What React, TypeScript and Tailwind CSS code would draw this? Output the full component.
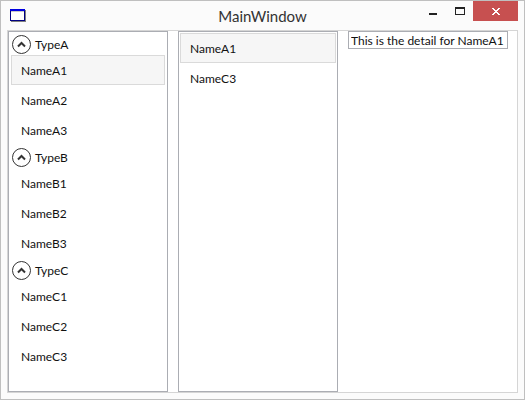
import React, { useState } from 'react';
import clsx from 'clsx';

const groups = [
  { type: 'TypeA', names: ['NameA1', 'NameA2', 'NameA3'] },
  { type: 'TypeB', names: ['NameB1', 'NameB2', 'NameB3'] },
  { type: 'TypeC', names: ['NameC1', 'NameC2', 'NameC3'] },
];

const recentNames = ['NameA1', 'NameC3'];

type ItemProps = {
  name: string;
  selected: boolean;
  onSelect: (name: string) => void;
};

const ListItem: React.FC<ItemProps> = ({ name, selected, onSelect }) => (
  <li>
    <button
      onClick={() => onSelect(name)}
      aria-pressed={selected}
      className={clsx(
        'flex h-[30px] w-full items-center border px-[9px] pt-[2px]',
        selected ? 'border-[#dadada] bg-[#f6f6f6]' : 'border-transparent',
      )}
    >
      {name}
    </button>
  </li>
);

type GroupProps = {
  type: string;
  names: string[];
  current: string;
  onSelect: (name: string) => void;
};

const Group: React.FC<GroupProps> = ({ type, names, current, onSelect }) => {
  const [open, setOpen] = useState(true);

  return (
    <section>
      <button
        onClick={() => setOpen(!open)}
        aria-expanded={open}
        className="flex h-[23px] w-full items-center gap-1 px-[3px] pt-[2px]"
      >
        <svg
          width="19"
          height="19"
          viewBox="0 0 19 19"
          fill="none"
          className={clsx(!open && 'rotate-180')}
        >
          <circle cx="9.5" cy="9.5" r="9" stroke="#333333" />
          <path d="M6 11.5 9.5 8 13 11.5" stroke="#333333" strokeWidth="2" />
        </svg>
        {type}
      </button>
      {open && (
        <ul className="px-[2px]">
          {names.map((name) => (
            <ListItem
              key={name}
              name={name}
              selected={name === current}
              onSelect={onSelect}
            />
          ))}
        </ul>
      )}
    </section>
  );
};

const TitleBar: React.FC = () => (
  <header className="grid h-[29px] shrink-0 grid-cols-[1fr_auto_1fr] bg-[#fbfbfb]">
    <svg
      width="16"
      height="14"
      viewBox="0 0 16 14"
      shapeRendering="crispEdges"
      className="mt-2 ml-[9px]"
    >
      <path d="M1 1h15v12H1z" fill="#808080" />
      <path d="M0 0h15v12H0z" fill="#000080" />
      <path d="M0 0h15v2H0z" fill="#0000e0" />
      <path d="M1 2h13v9H1z" fill="#ffffff" />
      <path d="M1 2h13v1H1z" fill="#c8c8c8" />
    </svg>
    <h1 className="text-[15px] leading-[30px] text-[#333333]">MainWindow</h1>
    <div className="mr-[6px] flex h-5 justify-end">
      <button aria-label="Minimize" className="flex w-[28px] justify-center">
        <svg width="8" height="20" viewBox="0 0 8 20">
          <path d="M0 12h8v2H0z" fill="#222222" />
        </svg>
      </button>
      <button aria-label="Maximize" className="flex w-[26px] justify-center">
        <svg width="10" height="20" viewBox="0 0 10 20">
          <path
            d="M0 6h10v8H0zM1 8v5h8V8z"
            fill="#222222"
            fillRule="evenodd"
          />
        </svg>
      </button>
      <button
        aria-label="Close"
        className="flex w-[45px] justify-center bg-[#c75050]"
      >
        <svg
          width="9"
          height="20"
          viewBox="0 0 9 20"
          shapeRendering="crispEdges"
        >
          <path
            d="M1 7h2v1h1v1h2V8h1V7h2v1H8v1H7v1H6v1h1v1h1v1h1v1H7v-1H6v-1H4v1H3v1H1v-1h1v-1h1v-1h1v-1H3V9H2V8H1z"
            fill="#ffffff"
          />
        </svg>
      </button>
    </div>
  </header>
);

export default function App() {
  const [current, setCurrent] = useState('NameA1');

  return (
    <div className="flex h-screen flex-col border border-[#bfbfbf] bg-[#fbfbfb] font-['Lato','Open_Sans',sans-serif] text-[12px] leading-4 text-[#111111]">
      <TitleBar />
      <main className="mx-[6px] mb-[6px] grid min-h-0 flex-1 grid-cols-[170fr_170fr_169fr] border border-[#d5d5d5] bg-white">
        <div className="mr-[10px] overflow-hidden border border-[#abadb3]">
          {groups.map((group) => (
            <Group
              key={group.type}
              type={group.type}
              names={group.names}
              current={current}
              onSelect={setCurrent}
            />
          ))}
        </div>
        <ul className="mr-[10px] border border-[#abadb3] p-px">
          {recentNames.map((name) => (
            <ListItem
              key={name}
              name={name}
              selected={name === current}
              onSelect={setCurrent}
            />
          ))}
        </ul>
        <div className="mr-[9px]">
          <input
            readOnly
            aria-label="Detail"
            value={`This is the detail for ${current}`}
            className="block h-[18px] w-full border border-[#abadb3] px-[2px]"
          />
        </div>
      </main>
    </div>
  );
}
